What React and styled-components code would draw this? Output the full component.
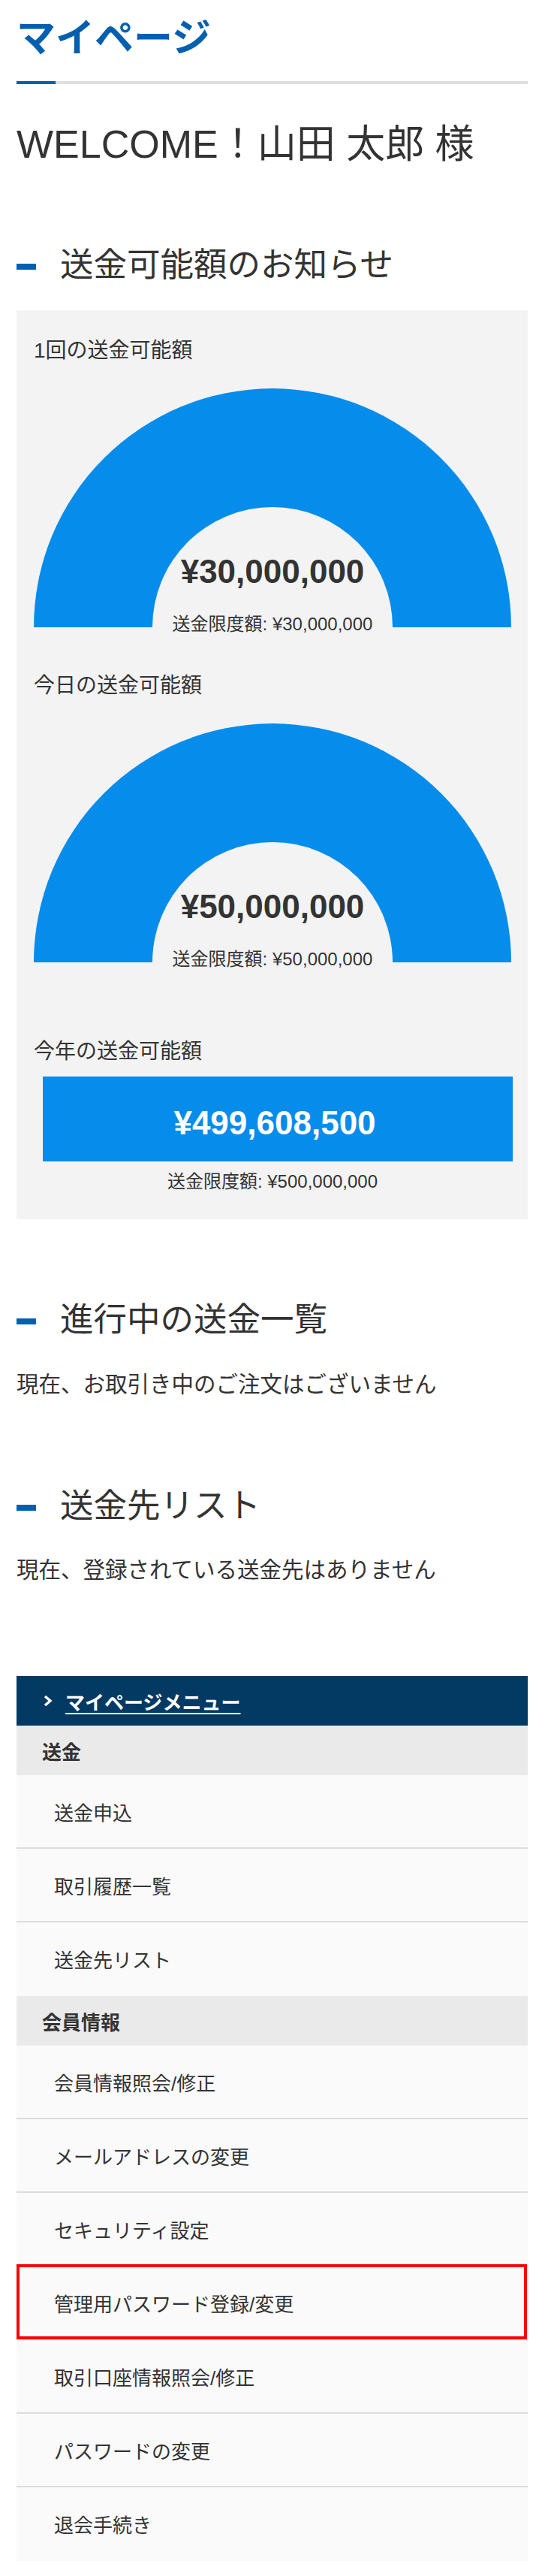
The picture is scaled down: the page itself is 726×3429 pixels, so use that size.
import React from "react";
import styled, { createGlobalStyle } from "styled-components";

const Global = createGlobalStyle`
  html, body { margin: 0; padding: 0; background: #fff; }
  body {
    font-family: "Liberation Sans", "Noto Sans CJK JP", sans-serif;
    color: #333;
  }
  * { box-sizing: border-box; }
`;

const BLUE = "#0060af";
const GAUGE = "#068ceb";

const Page = styled.div`
  padding: 20px 23px 20px 22px;
`;

const PageTitle = styled.h1`
  margin: 0;
  font-size: 52px;
  line-height: 62px;
  font-weight: 700;
  color: ${BLUE};
`;

const TitleRule = styled.div`
  margin-top: 26px;
  height: 4px;
  background: linear-gradient(to right, ${BLUE} 52px, #dedede 52px);
`;

const Welcome = styled.p`
  margin: 49px 0 0;
  font-size: 52px;
  line-height: 62px;
  font-weight: 400;
`;

const SectionHeading = styled.h2`
  margin: ${(p) => p.$gap}px 0 0;
  display: flex;
  align-items: center;
  font-size: 44.5px;
  line-height: 54px;
  font-weight: 400;
  &::before {
    content: "";
    width: 26px;
    height: 8px;
    background: ${BLUE};
    margin-right: 32px;
    transform: translateY(2px);
    flex: none;
  }
`;

const LimitBox = styled.section`
  margin-top: 33px;
  background: #f3f3f3;
  padding: 36px 22px 35px 23px;
`;

const Label = styled.div`
  margin-top: ${(p) => p.$gap || 0}px;
  font-size: 28px;
  line-height: 36px;
`;

const Gauge = styled.div`
  position: relative;
  margin-top: 32px;
  width: 636px;
  height: 318px;
  svg { display: block; }
`;

const GaugeText = styled.div`
  position: absolute;
  top: 218px;
  left: 0;
  right: 0;
  text-align: center;
`;

const BigAmount = styled.div`
  font-size: 44px;
  line-height: 52px;
  font-weight: 700;
  color: ${(p) => (p.$light ? "#fff" : "#333")};
`;

const LimitNote = styled.div`
  margin-top: ${(p) => p.$gap}px;
  font-size: 24px;
  line-height: 30px;
  text-align: center;
`;

const YearBar = styled.div`
  margin: 15px -2px 0 12px;
  background: ${GAUGE};
  padding: 36px 8px 25px 0;
  text-align: center;
`;

const BodyText = styled.p`
  margin: ${(p) => p.$gap}px 0 0;
  font-size: 29.5px;
  line-height: 40px;
`;

const Menu = styled.nav`
  margin-top: 121px;
  background: #fafafa;
`;

const MenuHeader = styled.div`
  height: 66px;
  background: #033a63;
  display: flex;
  align-items: center;
  padding-left: 36px;
  gap: 17px;
  color: #fff;
  font-size: 26px;
  font-weight: 700;
  svg { display: block; }
`;

const MenuTitle = styled.span`
  text-decoration: underline;
  text-underline-offset: 4px;
  text-decoration-thickness: 2px;
`;

const GroupHeader = styled.div`
  height: 66px;
  background: #eaeaea;
  display: flex;
  align-items: center;
  padding-left: 34px;
  font-size: 26px;
  font-weight: 700;
  color: #333;
`;

const MenuItem = styled.div`
  position: relative;
  height: 98px;
  border-bottom: 2px solid #dcdcdc;
  background: #fafafa;
  display: flex;
  align-items: center;
  padding-left: 50px;
  font-size: 26px;
  color: #333;
  &:last-child { border-bottom-color: transparent; }
  ${(p) =>
    p.$highlight &&
    `
    &::after {
      content: "";
      position: absolute;
      top: -3px;
      bottom: -1px;
      left: 0;
      right: 1px;
      border: 4px solid #ff0000;
      pointer-events: none;
    }
  `}
`;

const GaugeChart = () => (
  <svg width="636" height="318" viewBox="0 0 636 318">
    <path
      d="M0 318 A318 318 0 0 1 636 318 L478 318 A160 160 0 0 0 158 318 Z"
      fill={GAUGE}
    />
  </svg>
);

const Chevron = () => (
  <svg width="12" height="16" viewBox="0 0 12 16">
    <polyline points="2,2 9,8 2,14" fill="none" stroke="#fff" strokeWidth="3.4" />
  </svg>
);

const groups = [
  { title: "送金", items: ["送金申込", "取引履歴一覧", "送金先リスト"] },
  {
    title: "会員情報",
    items: [
      "会員情報照会/修正",
      "メールアドレスの変更",
      "セキュリティ設定",
      "管理用パスワード登録/変更",
      "取引口座情報照会/修正",
      "パスワードの変更",
      "退会手続き",
    ],
  },
];

export default function App() {
  return (
    <>
      <Global />
      <Page>
        <PageTitle>マイページ</PageTitle>
        <TitleRule />
        <Welcome>WELCOME！山田 太郎 様</Welcome>

        <SectionHeading $gap={103}>送金可能額のお知らせ</SectionHeading>
        <LimitBox>
          <Label>1回の送金可能額</Label>
          <Gauge>
            <GaugeChart />
            <GaugeText>
              <BigAmount>¥30,000,000</BigAmount>
              <LimitNote $gap={29}>送金限度額: ¥30,000,000</LimitNote>
            </GaugeText>
          </Gauge>

          <Label $gap={60}>今日の送金可能額</Label>
          <Gauge>
            <GaugeChart />
            <GaugeText>
              <BigAmount>¥50,000,000</BigAmount>
              <LimitNote $gap={29}>送金限度額: ¥50,000,000</LimitNote>
            </GaugeText>
          </Gauge>

          <Label $gap={101}>今年の送金可能額</Label>
          <YearBar>
            <BigAmount $light>¥499,608,500</BigAmount>
          </YearBar>
          <LimitNote $gap={12}>送金限度額: ¥500,000,000</LimitNote>
        </LimitBox>

        <SectionHeading $gap={107}>進行中の送金一覧</SectionHeading>
        <BodyText $gap={39}>現在、お取引き中のご注文はございません</BodyText>

        <SectionHeading $gap={115}>送金先リスト</SectionHeading>
        <BodyText $gap={38}>現在、登録されている送金先はありません</BodyText>

        <Menu>
          <MenuHeader>
            <Chevron />
            <MenuTitle>マイページメニュー</MenuTitle>
          </MenuHeader>
          {groups.map((g) => (
            <div key={g.title}>
              <GroupHeader>{g.title}</GroupHeader>
              {g.items.map((it) => (
                <MenuItem key={it} $highlight={it === "管理用パスワード登録/変更"}>
                  {it}
                </MenuItem>
              ))}
            </div>
          ))}
        </Menu>
      </Page>
    </>
  );
}
